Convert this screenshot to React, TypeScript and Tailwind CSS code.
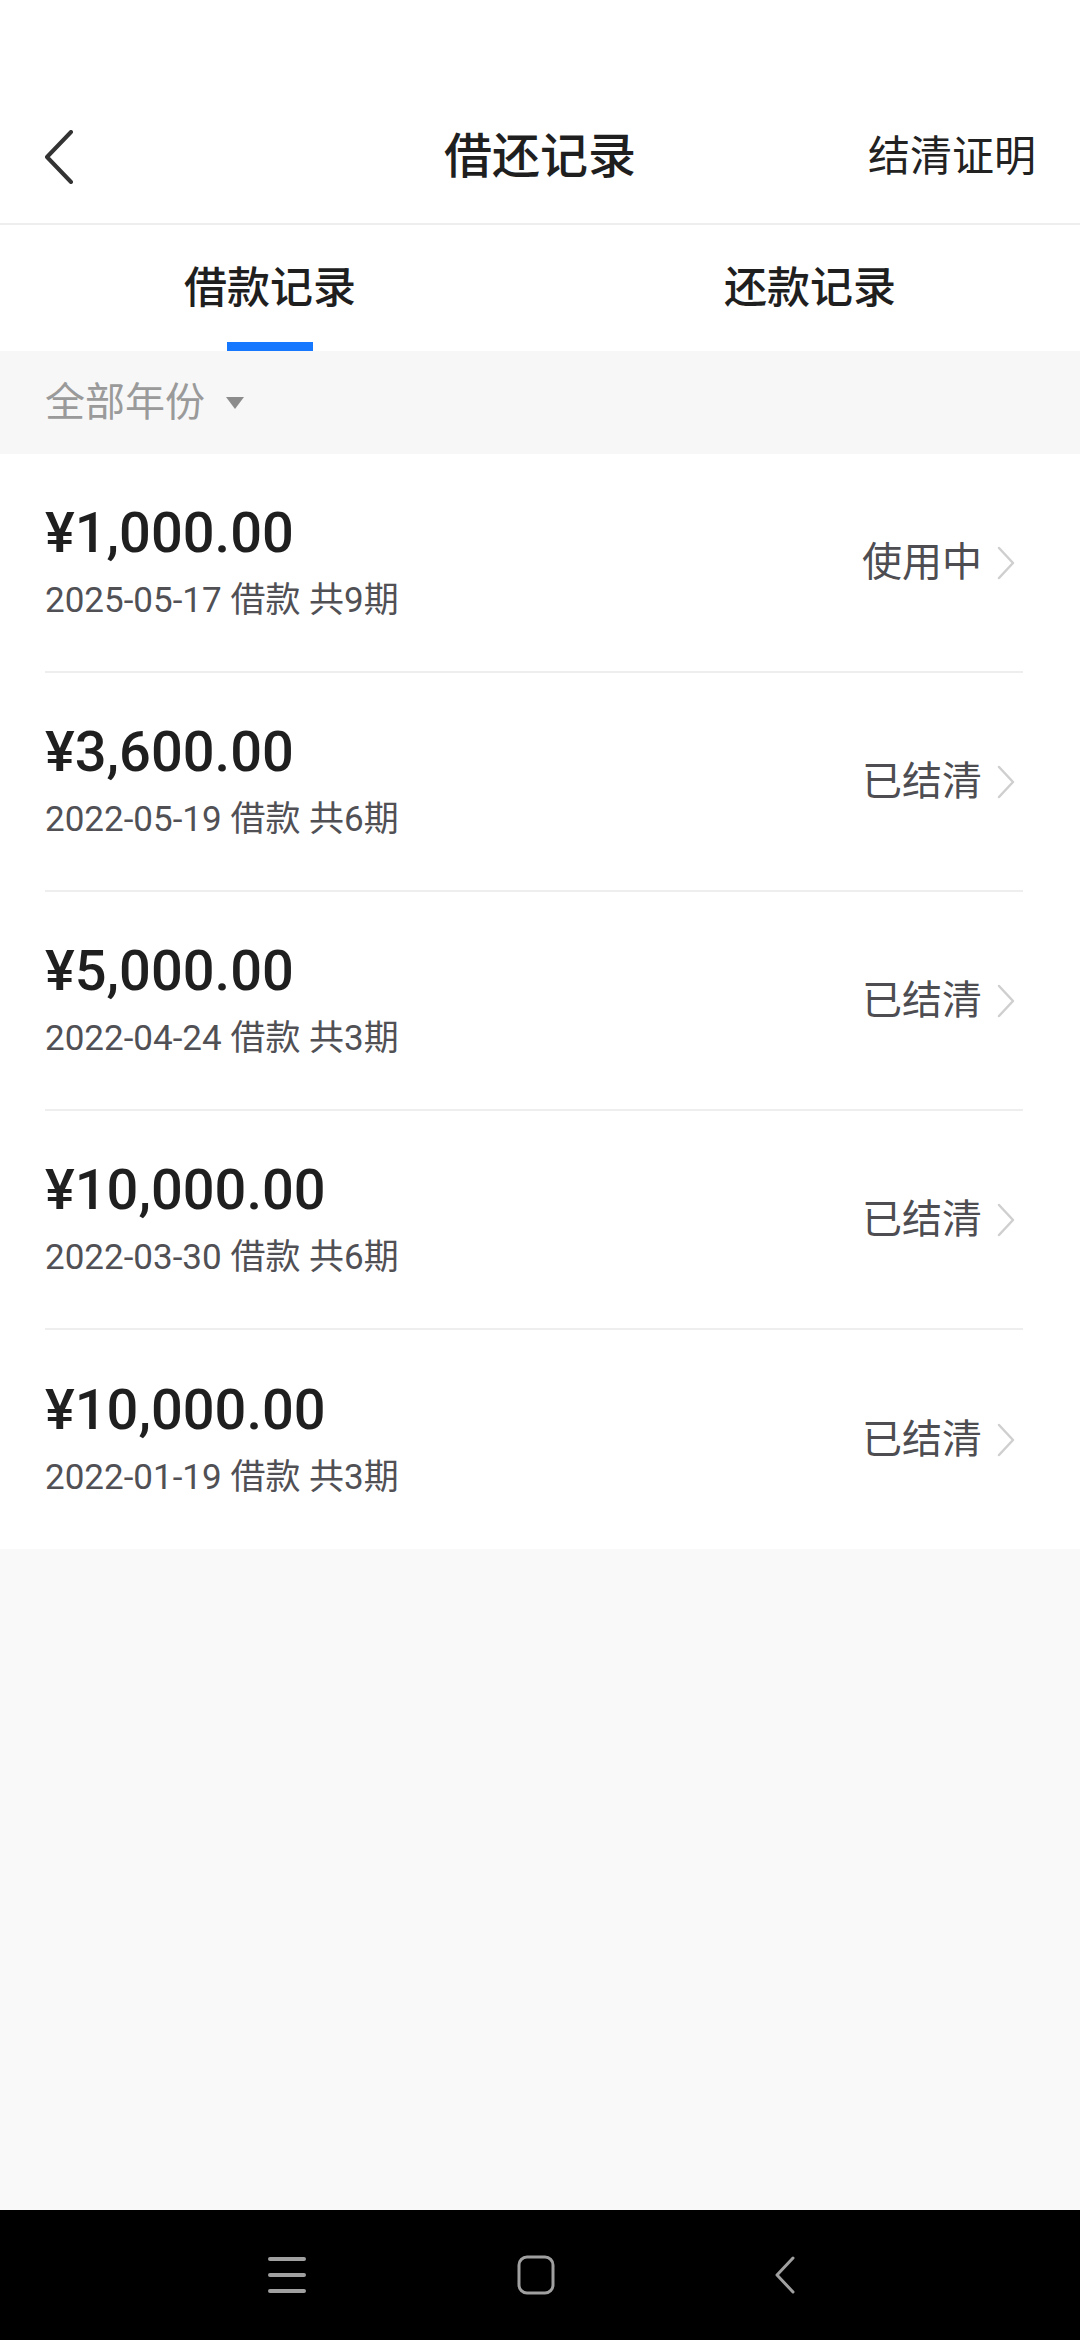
import React from "react";

const font = { fontFamily: "Roboto, 'Noto Sans CJK SC', sans-serif" };

type Loan = { amount: string; date: string; terms: number; status: string };

const loans: Loan[] = [
  { amount: "¥1,000.00", date: "2025-05-17", terms: 9, status: "使用中" },
  { amount: "¥3,600.00", date: "2022-05-19", terms: 6, status: "已结清" },
  { amount: "¥5,000.00", date: "2022-04-24", terms: 3, status: "已结清" },
  { amount: "¥10,000.00", date: "2022-03-30", terms: 6, status: "已结清" },
  { amount: "¥10,000.00", date: "2022-01-19", terms: 3, status: "已结清" },
];

function BackIcon() {
  return (
    <svg width="30" height="54" viewBox="0 0 30 54" fill="none">
      <path d="M27 2 L3 27 L27 52" stroke="#333333" strokeWidth="4" strokeLinecap="round" strokeLinejoin="round" />
    </svg>
  );
}

function ChevronRight() {
  return (
    <svg width="20" height="34" viewBox="0 0 20 34" fill="none">
      <path d="M3 2 L17 17 L3 32" stroke="#cfcfcf" strokeWidth="2.5" strokeLinecap="round" strokeLinejoin="round" />
    </svg>
  );
}

function LoanRow({ loan, last }: { loan: Loan; last: boolean }) {
  return (
    <div className={`flex h-[219px] items-center justify-between ${last ? "" : "border-b-2 border-[#eeeeee]"}`}>
      <div className="flex flex-col">
        <span className="text-[56px] leading-[64px] font-medium text-[#1f1f1f]">{loan.amount}</span>
        <span className="mt-[13px] text-[35px] leading-[46px] text-[#505055]">
          {loan.date} 借款 共{loan.terms}期
        </span>
      </div>
      <div className="flex items-center gap-[14px] pr-[7px]">
        <span className="text-[40px] leading-[50px] text-[#4d4d52]">{loan.status}</span>
        <ChevronRight />
      </div>
    </div>
  );
}

export default function App() {
  return (
    <div className="flex h-[2340px] w-[1080px] flex-col bg-[#f9f9f9]" style={font}>
      <div className="h-[90px] shrink-0 bg-white" />

      {/* header */}
      <header className="grid h-[135px] shrink-0 grid-cols-[1fr_auto_1fr] items-center border-b-2 border-[#eeeeee] bg-white px-[44px]">
        <div className="flex items-center">
          <BackIcon />
        </div>
        <h1 className="text-[48px] leading-[60px] font-medium text-[#1f1f1f]">借还记录</h1>
        <div className="flex justify-end">
          <span className="text-[42px] leading-[56px] text-[#222222]">结清证明</span>
        </div>
      </header>

      {/* tabs */}
      <nav className="grid h-[126px] shrink-0 grid-cols-2 bg-white">
        <div className="flex flex-col items-center justify-end">
          <span className="text-[43px] leading-[56px] font-medium text-[#1f1f1f]">借款记录</span>
          <span className="mt-[26px] h-[9px] w-[86px] bg-[#1677ff]" />
        </div>
        <div className="flex flex-col items-center justify-end">
          <span className="text-[43px] leading-[56px] font-medium text-[#1f1f1f]">还款记录</span>
          <span className="mt-[26px] h-[9px] w-[86px]" />
        </div>
      </nav>

      {/* year filter */}
      <div className="flex h-[103px] shrink-0 items-center gap-[20px] bg-[#f7f7f7] px-[45px]">
        <span className="text-[40px] leading-[52px] text-[#9a9a9a]">全部年份</span>
        <svg width="20" height="14" viewBox="0 0 20 14">
          <path d="M1 1 H19 L10 13 Z" fill="#8c8c8c" />
        </svg>
      </div>

      {/* list */}
      <div className="shrink-0 bg-white pr-[57px] pl-[45px]">
        {loans.map((l, i) => (
          <LoanRow key={i} loan={l} last={i === loans.length - 1} />
        ))}
      </div>

      <div className="flex-1" />

      {/* system nav */}
      <div className="flex h-[130px] shrink-0 items-center gap-[189px] bg-black pl-[257px]">
        <div className="flex w-[60px] justify-center">
          <svg width="40" height="38" viewBox="0 0 40 38" fill="none">
            <path d="M3 3 H37 M3 19 H37 M3 35 H37" stroke="#a0a0a0" strokeWidth="4" strokeLinecap="round" />
          </svg>
        </div>
        <div className="flex w-[60px] justify-center">
          <svg width="38" height="40" viewBox="0 0 38 40" fill="none">
            <rect x="2" y="2" width="34" height="36" rx="8" stroke="#a0a0a0" strokeWidth="3" />
          </svg>
        </div>
        <div className="flex w-[60px] justify-center">
          <svg width="20" height="38" viewBox="0 0 20 38" fill="none">
            <path d="M18 2 L2 19 L18 36" stroke="#a0a0a0" strokeWidth="3" strokeLinecap="round" strokeLinejoin="round" />
          </svg>
        </div>
      </div>
    </div>
  );
}
